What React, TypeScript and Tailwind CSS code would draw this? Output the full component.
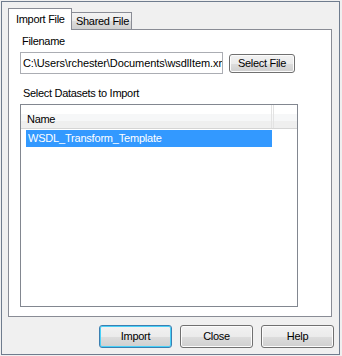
import React from "react";

const font = "font-['Liberation_Sans',Arial,sans-serif] text-[11px] leading-[13px] tracking-[-0.3px] text-black";

const buttonBase =
  "flex items-center justify-center rounded-[3px] border bg-[linear-gradient(to_bottom,#f2f2f2_0%,#ebebeb_50%,#dddddd_51%,#cfcfcf_100%)]";

const DialogButton: React.FC<{ label: string; focused?: boolean; className?: string }> = ({
  label,
  focused,
  className = "",
}) => (
  <button
    type="button"
    className={
      buttonBase +
      " " +
      (focused
        ? "border-[#3c7fb1] shadow-[inset_0_0_0_1px_#48d0f8]"
        : "border-[#707070] shadow-[inset_0_0_0_1px_#fcfcfc]") +
      " " +
      className
    }
  >
    {label}
  </button>
);

const App: React.FC = () => {
  return (
    <div className={`w-[342px] h-[356px] bg-[#f0f0f0] pl-px pt-px pr-[2px] pb-px ${font}`}>
      <div className="h-full border border-[#6f7c8e] bg-[#f0f0f0] pt-[6px] pl-[6px] pr-[5px] flex flex-col">
        {/* tabs */}
        <div className="flex items-end h-[21px]">
          <div className="relative z-10 -mb-px h-[22px] w-[64px] border border-b-0 border-[#898c95] bg-white pl-[7px] pt-[4px]">
            Import File
          </div>
          <div className="h-[17px] w-[60px] border border-l-0 border-b-0 border-[#898c95] bg-[linear-gradient(to_bottom,#f3f3f3_0%,#ebebeb_50%,#dddddd_51%,#cfcfcf_100%)] pl-[4px] pt-[2px]">
            Shared File
          </div>
        </div>

        {/* panel */}
        <div className="h-[288px] w-[324px] border border-[#898c95] bg-white pl-[11px] pt-[5px] flex flex-col">
          <div className="pl-[2px]">Filename</div>
          <div className="mt-[4px] flex items-center gap-[6px]">
            <div className="h-[22px] w-[203px] overflow-hidden whitespace-nowrap border border-[#abadb3] bg-white pl-[2px] pt-[4px] tracking-[-0.1px]">
              C:\Users\rchester\Documents\wsdlItem.xml
            </div>
            <DialogButton label="Select File" className="h-[19px] w-[66px]" />
          </div>
          <div className="mt-[13px] pl-[3px]">Select Datasets to Import</div>
          <div className="mt-[4px] h-[203px] w-[278px] border border-[#828790] bg-white flex flex-col">
            <div className="flex h-[24px] border-b border-[#d5d5d5] bg-[linear-gradient(to_bottom,#ffffff_0%,#ffffff_40%,#f6f7f8_41%,#f6f7f8_70%,#efefef_71%,#efefef_100%)]">
              <div className="w-[251px] border-r border-[#e3e3e3] pl-[6px] pt-[8px]">Name</div>
              <div className="ml-px flex-1 border-l border-[#e3e3e3]" />
            </div>
            <div className="mt-px ml-[5px] h-[17px] w-[246px] bg-[#3399ff] pl-[2px] pt-[2px] text-white tracking-[-0.2px]">
              WSDL_Transform_Template
            </div>
          </div>
        </div>

        {/* buttons */}
        <div className="mt-[8px] flex justify-end gap-[8px]">
          <DialogButton label="Import" focused className="h-[23px] w-[73px]" />
          <DialogButton label="Close" className="h-[23px] w-[73px]" />
          <DialogButton label="Help" className="h-[23px] w-[73px]" />
        </div>
      </div>
    </div>
  );
};

export default App;
